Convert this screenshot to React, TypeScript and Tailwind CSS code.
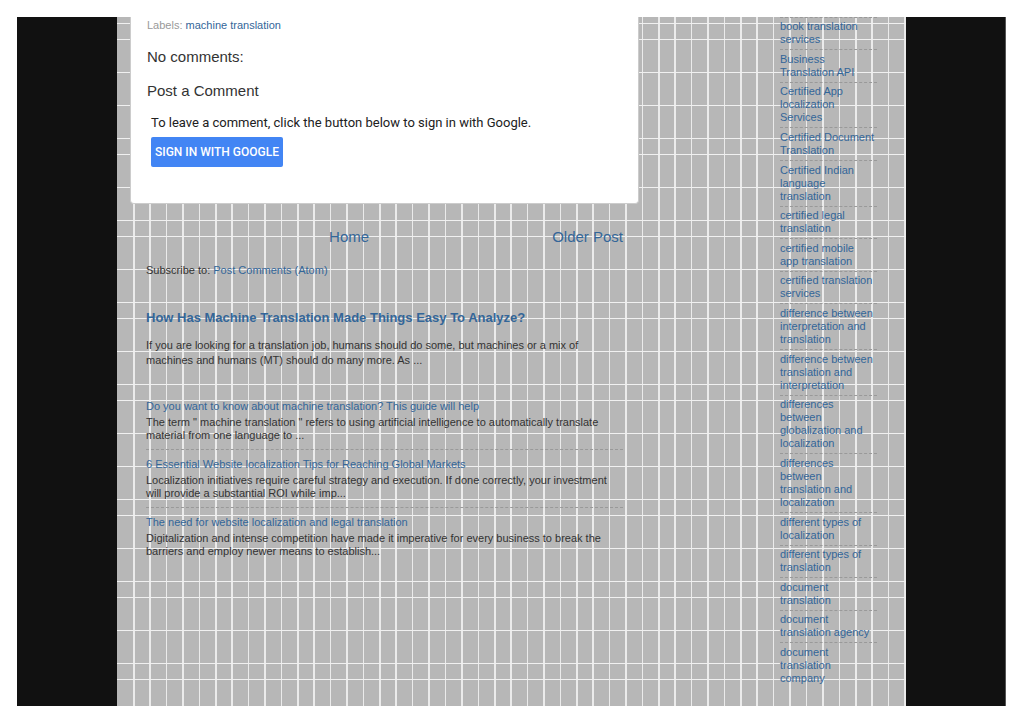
const columnLines: [number, number][] = [
  [16, 2], [32, 2], [49, 1], [65, 2], [82, 1], [98, 2], [114, 2], [131, 1], [147, 2], [164, 1],
  [180, 2], [196, 2], [213, 1], [229, 2], [246, 1], [262, 2], [278, 2], [295, 1], [311, 2], [328, 1],
  [344, 2], [361, 1], [377, 2], [393, 2], [410, 1], [426, 2], [443, 1], [459, 2], [475, 2], [492, 1],
  [508, 2], [525, 1], [541, 2], [557, 2], [574, 1], [590, 2], [607, 1], [623, 2], [639, 2], [656, 1],
  [672, 2], [689, 1], [705, 2], [722, 1], [738, 2], [754, 2], [771, 1], [787, 2],
];

const rowLines = [
  6, 22, 55, 88, 121, 137, 170, 203, 219, 252, 285, 301, 334, 367, 383, 416, 449, 482, 498, 531,
  564, 580, 613, 646, 662,
];

const labels = [
  "book translation services",
  "Business Translation API",
  "Certified App localization Services",
  "Certified Document Translation",
  "Certified Indian language translation",
  "certified legal translation",
  "certified mobile app translation",
  "certified translation services",
  "difference between interpretation and translation",
  "difference between translation and interpretation",
  "differences between globalization and localization",
  "differences between translation and localization",
  "different types of localization",
  "different types of translation",
  "document translation",
  "document translation agency",
  "document translation company",
];

const posts = [
  {
    title: "Do you want to know about machine translation? This guide will help",
    text: 'The term " machine translation " refers to using artificial intelligence to automatically translate material from one language to ...',
  },
  {
    title: "6 Essential Website localization Tips for Reaching Global Markets",
    text: "Localization initiatives require careful strategy and execution. If done correctly, your investment will provide a substantial ROI while imp...",
  },
  {
    title: "The need for website localization and legal translation",
    text: "Digitalization and intense competition have made it imperative for every business to break the barriers and employ newer means to establish...",
  },
];

function GridTexture() {
  return (
    <svg className="absolute inset-0 h-full w-full" aria-hidden="true" shapeRendering="crispEdges">
      {columnLines.map(([x, w]) => (
        <rect key={x} x={x} y="0" width={w} height="100%" fill="#ebebeb" />
      ))}
      {rowLines.map((y) => (
        <rect key={y} x="0" y={y} width="100%" height="1" fill="#f0f0f0" />
      ))}
    </svg>
  );
}

function CommentCard() {
  return (
    <section className="rounded-b border border-t-0 border-[#cccccc] bg-white px-4 pb-9">
      <p className="pt-px leading-[14px] text-[#999999]">
        Labels:{" "}
        <a href="#machine-translation" className="text-[#336699]">
          machine translation
        </a>
      </p>
      <h4 className="mt-4 text-[15px] leading-[18px] text-[#333333]">No comments:</h4>
      <h4 className="mt-4 text-[15px] leading-[18px] text-[#333333]">Post a Comment</h4>
      <div className="mt-[15px] px-1 font-[Roboto,sans-serif]">
        <p className="text-[13px] leading-4 text-[#212121]">
          To leave a comment, click the button below to sign in with Google.
        </p>
        <button
          type="button"
          className="mt-[6px] h-[30px] rounded-[2px] bg-[#4285f4] px-1 text-[12px] font-medium text-white"
        >
          SIGN IN WITH GOOGLE
        </button>
      </div>
    </section>
  );
}

export default function App() {
  return (
    <div className="flex min-h-screen bg-white py-[17px] pr-[18px] pl-[17px] font-['Liberation_Sans',Arial,sans-serif] text-[11px] leading-[13px] text-[#333333]">
      <div className="flex flex-1 border-r border-[#555555] bg-[#111111] pr-[99px] pl-[100px]">
        <div className="relative flex flex-1 bg-[#b7b7b7]">
          <GridTexture />
          <main className="relative ml-[13px] w-[509px]">
            <CommentCard />
            <div className="px-4">
              <nav className="mt-6 flex text-[15px] leading-[18px] text-[#336699]">
                <div className="flex-1 text-center">
                  <a href="#home">Home</a>
                </div>
                <a href="#older">Older Post</a>
              </nav>
              <p className="mt-[17px] leading-[14px]">
                Subscribe to:{" "}
                <a href="#atom" className="text-[#336699]">Post Comments (Atom)</a>
              </p>
              <article className="mt-[33px]">
                <h3 className="text-[13px] leading-4 font-bold text-[#336699]">
                  <a href="#analyze">How Has Machine Translation Made Things Easy To Analyze?</a>
                </h3>
                <p className="mt-3 leading-[15px]">
                  If you are looking for a translation job, humans should do some, but machines or a mix of
                  machines and humans (MT) should do many more. As ...
                </p>
              </article>
              <ul className="mt-6">
                {posts.map((post) => (
                  <li
                    key={post.title}
                    className="border-b border-dashed border-[#999999] pt-2 pb-[7px] last:border-b-0"
                  >
                    <a href="#post" className="block text-[#336699]">{post.title}</a>
                    <p className="mt-[3px]">{post.text}</p>
                  </li>
                ))}
              </ul>
            </div>
          </main>
          <aside className="relative mr-[29px] ml-auto flex w-[97px] flex-col border-t border-dashed border-[#999999] pb-[18px]">
            <ul className="flex flex-1 flex-col justify-between text-[#336699]">
              {labels.map((label) => (
                <li
                  key={label}
                  className="border-b border-dashed border-[#999999] pt-[2px] pr-[2px] pb-[3px] last:border-b-0"
                >
                  <a href="#label">{label}</a>
                </li>
              ))}
            </ul>
          </aside>
        </div>
      </div>
    </div>
  );
}
